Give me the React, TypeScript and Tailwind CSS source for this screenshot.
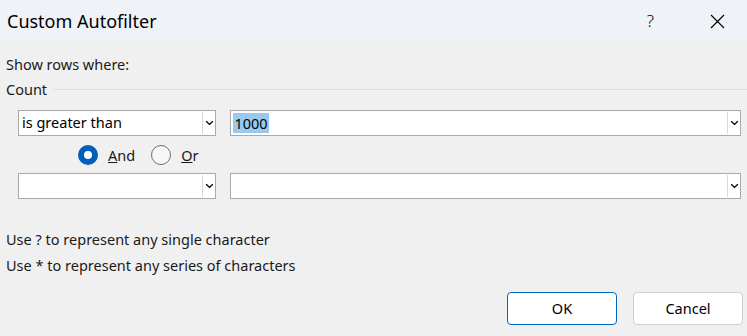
import React from 'react';

const font = { fontFamily: '"Segoe UI", "Noto Sans", "Open Sans", sans-serif' };

function Chevron() {
  return (
    <svg width="9" height="6" viewBox="0 0 9 6" className="text-black">
      <path d="M1.2 1.3 L4.5 4.4 L7.8 1.3" fill="none" stroke="currentColor" strokeWidth="1.4" />
    </svg>
  );
}

function Combo({ value, selected, className }: { value?: string; selected?: boolean; className: string }) {
  return (
    <div className={`flex h-[26px] items-stretch border border-[#a9a9a9] bg-white ${className}`}>
      <div className="flex flex-1 items-center pl-[2px] text-[14.5px] text-black">
        {value && (
          <span className={selected ? 'bg-[#99c9ef] px-[1px] leading-[20px]' : 'pl-[1px]'}>{value}</span>
        )}
      </div>
      <div className="my-[1px] flex w-[13px] items-center justify-center border-l border-[#d9d9d9]">
        <Chevron />
      </div>
    </div>
  );
}

function Radio({ checked }: { checked?: boolean }) {
  return checked ? (
    <span className="flex h-[20px] w-[20px] shrink-0 items-center justify-center rounded-full bg-[#005fb8]">
      <span className="h-[8px] w-[8px] rounded-full bg-white" />
    </span>
  ) : (
    <span className="block h-[20px] w-[20px] shrink-0 rounded-full border border-[#6e6e6e] bg-[#f7f7f7]" />
  );
}

export default function App() {
  return (
    <div className="flex h-[336px] w-[747px] flex-col bg-[#f0f0f0] text-[#1a1a1a]" style={font}>
      <header className="flex h-[42px] items-center bg-[#eff3f7] pl-[7px]">
        <h1 className="flex-1 text-[18px] text-black">Custom Autofilter</h1>
        <span className="mr-[56px] text-[17px] font-light text-black">?</span>
        <svg width="15" height="15" viewBox="0 0 15 15" className="mr-[22px]">
          <path d="M1 1 L14 14 M14 1 L1 14" stroke="black" strokeWidth="1.2" />
        </svg>
      </header>

      <div className="flex flex-1 flex-col px-[6px]">
        <p className="mt-[12px] text-[14.5px] leading-[20px]">Show rows where:</p>
        <div className="mt-[5px] flex items-center">
          <span className="text-[14.5px] leading-[20px]">Count</span>
          <div className="ml-[6px] mr-[-6px] h-px flex-1 bg-[#dcdcdc]" />
        </div>

        <div className="mt-[11px] flex gap-[14px] pl-[12px]">
          <Combo value="is greater than" className="w-[199px]" />
          <Combo value="1000" selected className="w-[512px]" />
        </div>

        <div className="mt-[9px] flex items-center pl-[72px] text-[14.5px] leading-[20px]">
          <Radio checked />
          <span className="ml-[10px]"><u>A</u>nd</span>
          <span className="ml-[16px]"><Radio /></span>
          <span className="ml-[10px]"><u>O</u>r</span>
        </div>

        <div className="mt-[8px] flex gap-[14px] pl-[12px]">
          <Combo className="w-[199px]" />
          <Combo className="w-[512px]" />
        </div>

        <p className="mt-[30px] text-[14.5px] leading-[20px]">Use ? to represent any single character</p>
        <p className="mt-[6px] text-[14.5px] leading-[20px]">Use * to represent any series of characters</p>

        <div className="mt-[17px] flex justify-end gap-[16px]">
          <button className="h-[33px] w-[110px] rounded-[4px] border border-[#0067c0] bg-white text-[14.5px] text-black">
            OK
          </button>
          <button className="mr-[-2px] h-[33px] w-[110px] rounded-[4px] border border-[#d0d0d0] bg-white text-[14.5px] text-black">
            Cancel
          </button>
        </div>
      </div>
    </div>
  );
}
